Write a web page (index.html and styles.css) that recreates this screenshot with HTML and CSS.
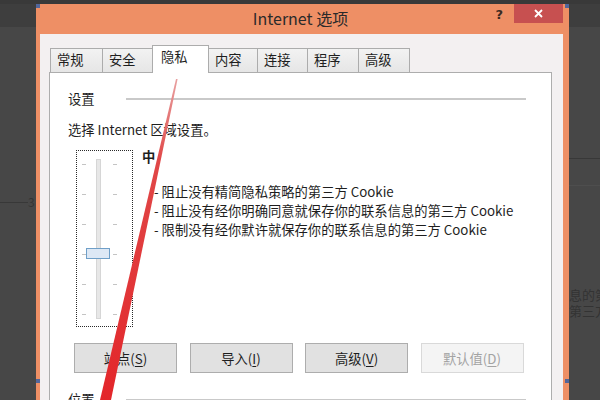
FILE: index.html
```html
<!DOCTYPE html>
<html lang="zh-CN">

<head>
 <meta charset="UTF-8">
 <title>Internet 选项</title>
 <link rel="stylesheet" href="styles.css">
</head>

<body>
 <div class="screen">
  <div class="screen-top"></div>

  <!-- page behind the dialog -->
  <div class="bg-rule bg-rule-left"></div>
  <span class="bg-mark">3</span>
  <div class="bg-rule bg-rule-right"></div>
  <div class="bg-rule bg-rule-right2"></div>
  <div class="bg-text">信息的第三方<br>的第三方</div>

  <!-- dialog -->
  <div class="window">
   <div class="titlebar">
    <div></div>
    <div class="title">Internet 选项</div>
    <div class="caption-buttons">
     <span class="help">?</span>
     <span class="close">
      <svg width="9" height="9" viewBox="0 0 9 9">
       <path d="M1 1 L8 8 M8 1 L1 8" stroke="#fff" stroke-width="1.8" fill="none" />
      </svg>
     </span>
    </div>
   </div>

   <div class="client">
    <div class="tabs">
     <div class="tab w53">常规</div>
     <div class="tab w51">安全</div>
     <div class="tab w57 selected">隐私</div>
     <div class="tab w50">内容</div>
     <div class="tab w51">连接</div>
     <div class="tab w52">程序</div>
     <div class="tab w52">高级</div>
    </div>

    <div class="panel">
     <div class="group-head">
      <span>设置</span>
      <span class="group-line"></span>
     </div>
     <div class="prompt">选择 Internet 区域设置。</div>

     <div class="level">
      <div class="slider">
       <div class="ticks ticks-left">
        <i></i><i></i><i></i><i></i><i></i><i></i>
       </div>
       <div class="track"></div>
       <div class="ticks ticks-right">
        <i></i><i></i><i></i><i></i><i></i><i></i>
       </div>
       <div class="thumb"></div>
      </div>
      <div class="level-info">
       <div class="level-name">中</div>
       <ul class="rules">
        <li>- 阻止没有精简隐私策略的第三方 Cookie</li>
        <li>- 阻止没有经你明确同意就保存你的联系信息的第三方 Cookie</li>
        <li>- 限制没有经你默许就保存你的联系信息的第三方 Cookie</li>
       </ul>
      </div>
     </div>

     <div class="buttons">
      <button class="btn">站点(<u>S</u>)</button>
      <button class="btn">导入(<u>I</u>)</button>
      <button class="btn">高级(<u>V</u>)</button>
      <button class="btn" disabled>默认值(<u>D</u>)</button>
     </div>

     <div class="group-head group-next">
      <span>位置</span>
      <span class="group-line"></span>
     </div>
    </div>
   </div>

   <!-- selection handles of the capture tool -->
   <i class="handle h-tl"></i>
   <i class="handle h-tr"></i>
   <i class="handle h-ml"></i>
   <i class="handle h-mr"></i>
  </div>

  <!-- red annotation stroke -->
  <svg class="annotation" width="600" height="400" viewBox="0 0 600 400">
   <defs>
    <linearGradient id="fade" x1="0" y1="0" x2="0" y2="1">
     <stop offset="0" stop-color="#e8a0a0" />
     <stop offset="0.25" stop-color="#e04848" />
     <stop offset="1" stop-color="#e3262a" />
    </linearGradient>
   </defs>
   <polygon points="176,79 177.6,79 111,400 100,400" fill="url(#fade)" />
  </svg>
 </div>
</body>

</html>
```

FILE: styles.css
```css
body {
 margin: 0;
 background: #474747;
 font-family: "Noto Sans CJK SC", "Microsoft YaHei", sans-serif;
 font-size: 13px;
 color: #1e1e1e;
}

.screen {
 position: relative;
 width: 600px;
 height: 400px;
 overflow: hidden;
 background: #474747;
}

.screen-top {
 height: 27px;
 box-sizing: border-box;
 border-top: 4px solid #393939;
 background: #3e3e3e;
}

/* bits of the page behind */
.bg-rule {
 position: absolute;
 height: 1px;
 background: #383838;
}

.bg-rule-left {
 left: 0;
 top: 202px;
 width: 28px;
}

.bg-rule-right {
 left: 560px;
 top: 158px;
 width: 40px;
}

.bg-rule-right2 {
 left: 560px;
 top: 185px;
 width: 40px;
 background: #4e4e4e;
}

.bg-mark {
 position: absolute;
 left: 28px;
 top: 194px;
 font-size: 12px;
 line-height: 16px;
 color: #343434;
}

.bg-text {
 position: absolute;
 left: 556px;
 top: 287px;
 font-size: 13px;
 line-height: 15.5px;
 white-space: nowrap;
 color: #333;
}

/* dialog window */
.window {
 position: absolute;
 left: 36px;
 top: 4px;
 width: 533px;
 height: 420px;
 background: #ee8f65;
}

.titlebar {
 display: grid;
 grid-template-columns: 1fr auto 1fr;
 height: 30px;
}

.title {
 font-size: 16px;
 line-height: 28px;
 color: #2a2a2a;
 padding-right: 4px;
}

.caption-buttons {
 display: flex;
 justify-content: flex-end;
 align-items: flex-start;
}

.help {
 font-family: "DejaVu Sans", sans-serif;
 font-weight: bold;
 font-size: 13px;
 line-height: 19px;
 color: #3a2a22;
 margin-right: 11px;
 margin-top: 1px;
}

.close {
 display: flex;
 align-items: center;
 justify-content: center;
 width: 49px;
 height: 19px;
 margin-right: 6px;
 background: #c75050;
}

.client {
 margin: 0 6px 0 4px;
 height: 390px;
 padding-top: 11px;
 box-sizing: border-box;
 background: #f3f0f1;
}

/* tabs */
.tabs {
 display: flex;
 align-items: flex-end;
 height: 27px;
 margin-left: 10px;
}

.tab {
 box-sizing: border-box;
 height: 24px;
 padding-left: 6px;
 line-height: 21px;
 font-size: 13.3px;
 border: 1px solid #acacac;
 border-bottom: none;
 margin-right: -1px;
 background: linear-gradient(#f2f2f2, #e6e6e6);
}

.tab.selected {
 position: relative;
 z-index: 1;
 height: 28px;
 margin-bottom: -1px;
 padding-left: 8px;
 line-height: 22px;
 background: #fff;
}

.w50 { width: 50px; }
.w51 { width: 51px; }
.w52 { width: 52px; }
.w53 { width: 53px; }
.w57 { width: 57px; }

/* tab page */
.panel {
 width: 503px;
 height: 340px;
 box-sizing: border-box;
 margin-left: 9px;
 padding-left: 18px;
 border: 1px solid #adadad;
 background: #fff;
}

.group-head {
 display: flex;
 align-items: center;
 margin-top: 16px;
 line-height: 20px;
 font-size: 13.3px;
}

.group-line {
 flex: 1;
 height: 2px;
 margin-left: 31px;
 margin-right: 25px;
 background: #c9c9c9;
}

.group-next {
 margin-top: 17px;
}

.prompt {
 margin-top: 11px;
 line-height: 20px;
 font-size: 13.3px;
}

.level {
 display: flex;
 margin-top: 10px;
 margin-left: 8px;
}

.slider {
 position: relative;
 display: flex;
 align-items: flex-start;
 width: 57px;
 height: 177px;
 box-sizing: border-box;
 border: 1px dotted #2a2a2a;
}

.ticks {
 display: flex;
 flex-direction: column;
 gap: 29px;
 width: 4px;
 padding-top: 13px;
}

.ticks i {
 display: block;
 height: 1px;
 background: #c4c4c4;
}

.ticks-left {
 margin-left: 5px;
}

.ticks-right {
 margin-left: 12px;
}

.track {
 width: 5px;
 height: 160px;
 margin-top: 8px;
 margin-left: 10px;
 box-sizing: border-box;
 border: 1px solid #d6d6d6;
 background: #e7e7e7;
}

.thumb {
 position: absolute;
 left: 9px;
 top: 97px;
 width: 24px;
 height: 11px;
 box-sizing: border-box;
 border: 1px solid #6f9fc8;
 background: #dde8f5;
}

.level-info {
 margin-left: 9px;
}

.level-name {
 font-weight: bold;
 font-size: 13.3px;
 line-height: 16px;
 margin-top: -1px;
}

.rules {
 list-style: none;
 margin: 17px 0 0 12px;
 padding: 0;
 font-size: 13.3px;
 line-height: 19px;
}

.buttons {
 display: flex;
 gap: 12.5px;
 margin-top: 16px;
 margin-left: 6px;
}

.btn {
 width: 103px;
 height: 30px;
 padding: 0;
 font-family: inherit;
 font-size: 13.3px;
 color: #1e1e1e;
 border: 1px solid #adadad;
 background: #e1e1e1;
}

.btn u {
 text-underline-offset: 2px;
}

.btn:disabled {
 color: #a3a3a3;
 border-color: #d9d9d9;
 background: #f4f4f4;
}

/* capture handles */
.handle {
 position: absolute;
 width: 4px;
 height: 4px;
 background: #52669a;
}

.h-tl { left: 0; top: 0; }
.h-tr { right: 0; top: 0; }
.h-ml { left: 0; top: 375px; }
.h-mr { right: 0; top: 375px; }

.annotation {
 position: absolute;
 left: 0;
 top: 0;
 pointer-events: none;
}
```
